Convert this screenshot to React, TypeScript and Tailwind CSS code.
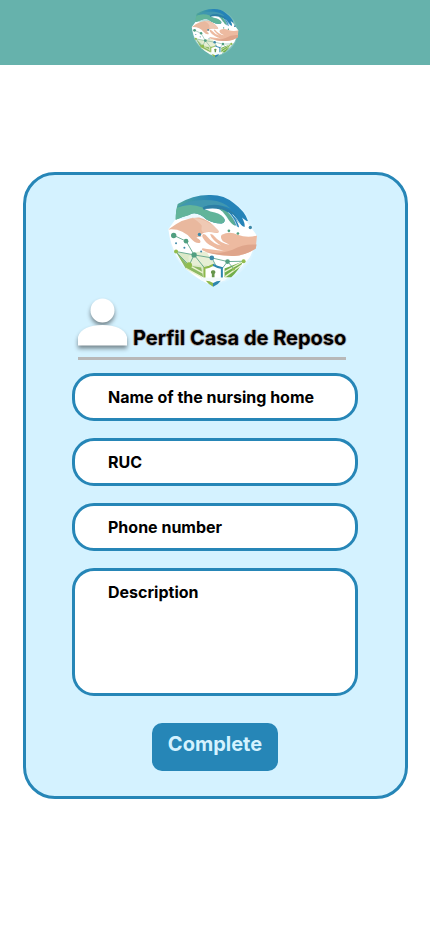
import React from "react";

function Logo({ className }: { className: string }) {
  return (
    <svg viewBox="20 14 272 284" className={className} role="img" aria-label="Caring hands logo">
      <defs>
        <radialGradient id="halo">
          <stop offset="0.8" stopColor="#fff" stopOpacity="0.9" />
          <stop offset="1" stopColor="#fff" stopOpacity="0" />
        </radialGradient>
        <linearGradient id="upper" x1="0" y1="0.6" x2="1" y2="0.4">
          <stop offset="0" stopColor="#56ab93" />
          <stop offset="0.4" stopColor="#3490b0" />
          <stop offset="0.6" stopColor="#2583b8" />
        </linearGradient>
        <linearGradient id="shieldEdge" gradientUnits="userSpaceOnUse" x1="130" y1="0" x2="186" y2="0">
          <stop offset="0.49" stopColor="#8db84c" />
          <stop offset="0.51" stopColor="#2e86ae" />
        </linearGradient>
      </defs>
      <path d="M46 48Q130 2 216 32Q266 56 284 108Q294 165 272 214Q230 276 158 292Q82 262 46 206Q20 160 26 116L46 96Z" fill="url(#halo)" opacity="0.6" />
      <path d="M46 92L24 122Q30 170 50 202Q90 267 157 290Q215 270 266 208Q286 175 288 140L252 92Z" fill="#fff" />
      <path d="M46 94Q46 66 52 47Q100 18 151 20Q192 20 220 45Q254 70 262 98Q256 98 244 87Q254 104 252 116Q242 113 224 92Q236 110 235 117Q222 112 214 94L202 75Q176 60 146 60Q142 63 159 68Q184 76 191 88Q196 102 184 105Q161 106 139 94Q106 65 86 80Q64 86 46 94Z" fill="url(#upper)" />
      <path d="M46 94Q46 70 50 58Q96 39 130 52Q122 63 152 68Q184 77 191 88Q196 102 184 105Q161 106 139 94Q106 65 86 80Q64 86 46 94Z" fill="#62b49a" />
      <path d="M50 57Q90 30 152 36Q187 38 211 61Q160 40 126 57Q90 42 50 57Z" fill="#4097b0" />
      <path d="M126 58Q140 48 168 50Q206 56 240 94Q212 68 176 62Q150 59 130 64Z" fill="#2d7ea4" />
      <path d="M132 62Q162 58 178 63Q192 78 202 96Q210 108 222 114Q202 110 190 88Q178 73 150 69Z" fill="#fff" />
      <path d="M176 61Q200 66 210 80Q222 96 225 113Q210 107 199 86Q188 69 176 61Z" fill="#5bad94" />
      <path d="M203 72Q219 86 229 113M216 78Q228 90 242 112" fill="none" stroke="#fff" strokeWidth="2" />
      <path d="M24 123Q70 86 116 87Q145 92 173 126Q179 135 164 133Q145 128 132 132Q118 137 123 145Q112 143 108 148Q124 155 119 163Q105 166 92 151Q66 119 24 123Z" fill="#e9b89e" />
      <path d="M94 87Q141 90 173 125Q177 134 164 132Q145 128 132 132Q120 132 124 112Q115 98 94 87Z" fill="#efc9b4" />
      <path d="M128 137Q122 140 129 151Q139 168 155 173Q170 184 190 187Q150 183 127 179Q118 184 136 190Q176 202 222 202Q252 201 285 180L289 141Q260 149 231 139Q207 127 184 139Q177 146 187 158L207 169Q179 165 157 139Q144 131 153 146Q167 164 182 171Q158 166 142 146Q134 136 128 137Z" fill="#edbaa0" />
      <path d="M133 190Q180 199 216 184Q248 165 288 168L285 181Q250 203 215 202Q160 200 133 190Z" fill="#dfa58b" />
      <path d="M47 189L101 199L154 240L130 266L77 230Z" fill="#dce9c8" />
      <path d="M84 205Q108 181 139 192L166 230L86 230Z" fill="#e7efd5" />
      <path d="M46 189L84 231L122 237L128 266L76 240Z" fill="#8db963" />
      <path d="M248 218L192 240V266H212Q232 248 248 218Z" fill="#72ae49" />
      <path d="M76 239L125 266M89 232L127 253M249 218L192 250M242 230L194 264" stroke="#eaf2cf" strokeWidth="4" />
      <path d="M41 141L77 158L101 199L132 238M47 189L101 199L154 208L201 219L249 218M101 199L86 230L46 189M201 219L184 241M154 208L166 231M201 219L221 242" fill="none" stroke="#559f84" strokeWidth="2.5" />
      <g fill="#519f80">
        <circle cx="40" cy="141" r="8" /><circle cx="77" cy="158" r="7" /><circle cx="101" cy="199" r="8" />
        <circle cx="201" cy="219" r="7" /><circle cx="205" cy="127" r="4" /><circle cx="232" cy="135" r="4" />
      </g>
      <g fill="#3c88a8">
        <circle cx="117" cy="138" r="5" /><circle cx="269" cy="117" r="5" /><circle cx="154" cy="208" r="7" />
        <circle cx="47" cy="164" r="3" /><circle cx="72" cy="178" r="3" /><circle cx="122" cy="189" r="3" />
      </g>
      <g fill="#91bd4e">
        <circle cx="47" cy="189" r="6" /><circle cx="86" cy="230" r="9" /><circle cx="249" cy="218" r="6" /><circle cx="219" cy="242" r="4" />
      </g>
      <path d="M132 267V238Q147 236 158 229Q169 236 184 238V267" fill="#fff" stroke="url(#shieldEdge)" strokeWidth="6" />
      <path d="M122 267H194V276H122Z" fill="#f2fbfb" />
      <path d="M136 276Q148 276 158 283Q168 276 181 276Q174 287 158 294Q144 287 136 276Z" fill="url(#shieldEdge)" />
      <path d="M158 245A6 6 0 0 1 162 256V266H154V256A6 6 0 0 1 158 245Z" fill="#66964b" />
    </svg>
  );
}

function PersonIcon() {
  return (
    <svg viewBox="0 0 49 48" className="h-12 w-[49px] shrink-0 overflow-visible drop-shadow-[0_3px_2px_rgba(0,0,0,0.45)]" fill="#fff" aria-hidden="true">
      <circle cx="24.5" cy="12.5" r="12" />
      <path d="M0 47.500V39C2 31 12 27 24.500 27S47 31 49 39V47.500Z" />
    </svg>
  );
}

const fieldStyle =
  "block w-full border-[3px] border-[#2686b7] bg-white pl-[33px] pr-4 text-base font-bold text-black placeholder:text-black placeholder:opacity-100 focus:outline-none";

function Field({ id, label, type = "text" }: { id: string; label: string; type?: string }) {
  return <input id={id} type={type} aria-label={label} placeholder={label} className={`${fieldStyle} h-12 rounded-[22px]`} />;
}

export default function App() {
  return (
    <div className="min-h-screen bg-white font-['Inter',sans-serif]">
      <header className="flex h-[65px] items-center justify-center bg-[#66b2ac]">
        <Logo className="h-[50px] w-12" />
      </header>
      <main className="pt-[107px] pr-[22px] pb-8 pl-[23px]">
        <section className="mx-auto max-w-[385px] rounded-[32px] border-[3px] border-[#2686b7] bg-[#d4f2ff] pt-[18px] pr-[47px] pb-[25px] pl-[46px]">
          <div className="ml-1.5 w-[268px]">
            <Logo className="mx-auto h-[95px] w-[91px]" />
            <div className="mt-2.5 flex items-end gap-1.5 border-b-[3px] border-[#b8b8b8] pb-[11px]">
              <PersonIcon />
              <h1 className="-mb-0.5 whitespace-nowrap text-xl leading-5 font-bold text-black [text-shadow:1px_0_0_#b8b8b8,-1px_0_0_#b8b8b8,0_1px_0_#b8b8b8,0_-1px_0_#b8b8b8]">
                Perfil Casa de Reposo
              </h1>
            </div>
          </div>
          <form className="mt-[13px]" onSubmit={(e) => e.preventDefault()}>
            <div className="flex flex-col gap-[17px]">
              <Field id="home-name" label="Name of the nursing home" />
              <Field id="ruc" label="RUC" />
              <Field id="phone" label="Phone number" type="tel" />
              <textarea id="description" aria-label="Description" placeholder="Description" className={`${fieldStyle} h-32 resize-none rounded-[22px] pt-[9px]`} />
            </div>
            <button type="submit" className="mx-auto mt-[27px] block h-12 w-[126px] rounded-[10px] bg-[#2686b7] pb-1.5 text-xl font-bold text-[#d4f2ff]">
              Complete
            </button>
          </form>
        </section>
      </main>
    </div>
  );
}
